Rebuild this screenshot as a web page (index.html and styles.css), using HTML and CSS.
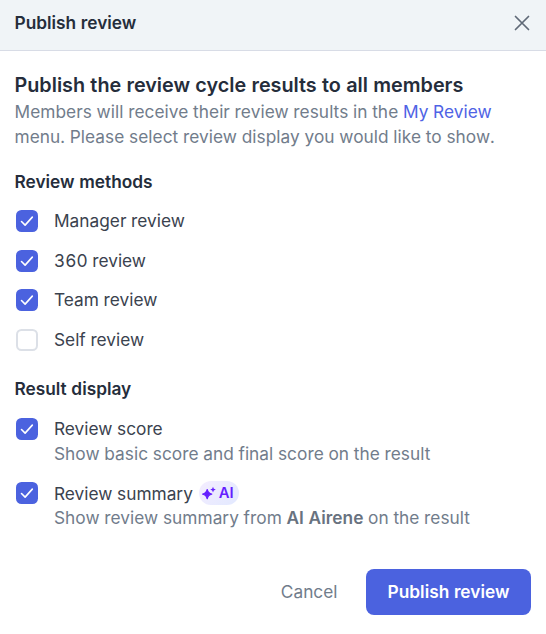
FILE: index.html
```html
<!DOCTYPE html>
<html lang="en">
<head>
<meta charset="utf-8">
<title>Publish review</title>
<link rel="stylesheet" href="styles.css">
</head>
<body>
<svg class="defs" aria-hidden="true">
  <symbol id="check" viewBox="0 0 22 22"><path d="M5.500 11.500l3.600 3.600 7.200-8" fill="none" stroke="#fff" stroke-width="1.6" stroke-linecap="round" stroke-linejoin="round"/></symbol>
</svg>
<div class="dialog">
  <header class="header">
    <h1 class="label">Publish review</h1>
    <button class="close" aria-label="Close"><svg width="16" height="16" viewBox="0 0 16 16"><path d="M1.500 1.500l13 13M14.500 1.500l-13 13" fill="none" stroke="#5f6977" stroke-width="1.7" stroke-linecap="round"/></svg></button>
  </header>
  <main class="content">
    <h2 class="title">Publish the review cycle results to all members</h2>
    <p class="intro">Members will receive their review results in the <a class="link">My Review</a><br>menu. Please select review display you would like to show.</p>
    <section class="group methods">
      <h3 class="label">Review methods</h3>
      <div class="option"><span class="box checked"><svg><use href="#check"/></svg></span><span class="name">Manager review</span></div>
      <div class="option"><span class="box checked"><svg><use href="#check"/></svg></span><span class="name">360 review</span></div>
      <div class="option"><span class="box checked"><svg><use href="#check"/></svg></span><span class="name">Team review</span></div>
      <div class="option"><span class="box"></span><span class="name">Self review</span></div>
    </section>
    <section class="group display">
      <h3 class="label">Result display</h3>
      <div class="option"><span class="box checked"><svg><use href="#check"/></svg></span>
        <div><div class="name">Review score</div><div class="hint">Show basic score and final score on the result</div></div></div>
      <div class="option"><span class="box checked"><svg><use href="#check"/></svg></span>
        <div><div class="name tagged"><span>Review summary</span><span class="badge"><svg width="14" height="14" viewBox="0 0 14 14" fill="#651fff"><path d="M5.200 3.600Q6 7.300 9.700 8.100Q6 8.900 5.200 12.600Q4.400 8.900.7 8.100Q4.400 7.300 5.200 3.600Z" stroke="#651fff" stroke-width="1.4" stroke-linejoin="round"/><path d="M11 .8l.8 2 2 .8-2 .8-.8 2-.8-2-2-.8 2-.8Z"/></svg>AI</span></div><div class="hint">Show review summary from <b>AI Airene</b> on the result</div></div></div>
    </section>
  </main>
  <footer class="footer">
    <button class="cancel">Cancel</button>
    <button class="publish">Publish review</button>
  </footer>
</div>
</body>
</html>
```
FILE: styles.css
```css
* { box-sizing: border-box; margin: 0; padding: 0; }
body {
  font: 400 17.3px/24.8px Inter, "Liberation Sans", sans-serif;
  font-variant-numeric: tabular-nums;
  color: #3a424e;
  background: #fff;
}
button { border: 0; background: none; font: inherit; }
.defs { position: absolute; width: 0; height: 0; }
.dialog { display: flex; flex-direction: column; height: 634px; overflow: hidden; }
.header {
  display: flex;
  align-items: center;
  justify-content: space-between;
  height: 51px;
  padding: 0 16px 4px 14.500px;
  background: #f0f4f7;
  border-bottom: 1px solid #d8dce6;
}
.label { font-size: 17.3px; line-height: 24.8px; font-weight: 600; color: #252d3b; }
.close { display: flex; }
.content { padding: 21px 15px 0 14.500px; }
.title { font-size: 19.8px; line-height: 26.600px; margin-bottom: 1.400px; font-weight: 600; color: #252d3b; }
.intro { color: #717c8b; letter-spacing: 0.045px; }
.link { color: #4f63e5; }
.group { display: flex; flex-direction: column; gap: 14.800px; }
.methods { margin-top: 20px; }
.display { margin-top: 24.300px; }
.display .label { margin-bottom: 0.500px; }
.option { display: flex; gap: 16px; }
.box {
  flex: none;
  width: 22px;
  height: 22px;
  margin: 0.800px 0 0 1.500px;
  border: 2px solid #dce0e7;
  border-radius: 5.500px;
}
.checked { border: 0; background: #4b62df; }
.box svg { display: block; width: 22px; height: 22px; }
.hint { color: #717c8b; letter-spacing: 0.03px; }
.hint b { font-weight: 600; color: #68727f; }
.tagged { display: flex; align-items: center; gap: 6px; }
.badge {
  display: flex;
  align-items: center;
  gap: 3px;
  height: 24px;
  margin-top: -1px;
  padding: 0 5px 0 3px;
  border-radius: 12px;
  background: linear-gradient(135deg, #f4edff, #e2e9ff);
  color: #651fff;
  font-size: 14.8px;
  font-weight: 600;
}
.footer {
  display: flex;
  justify-content: flex-end;
  align-items: center;
  gap: 28.500px;
  margin-top: auto;
  padding: 0 15px 19px;
}
.cancel { color: #717c8b; padding-top: 1.500px; }
.publish {
  width: 165px;
  height: 46.500px;
  padding-top: 1.500px;
  border-radius: 8px;
  background: #4b62df;
  color: #fff;
  font-weight: 600;
}
```
